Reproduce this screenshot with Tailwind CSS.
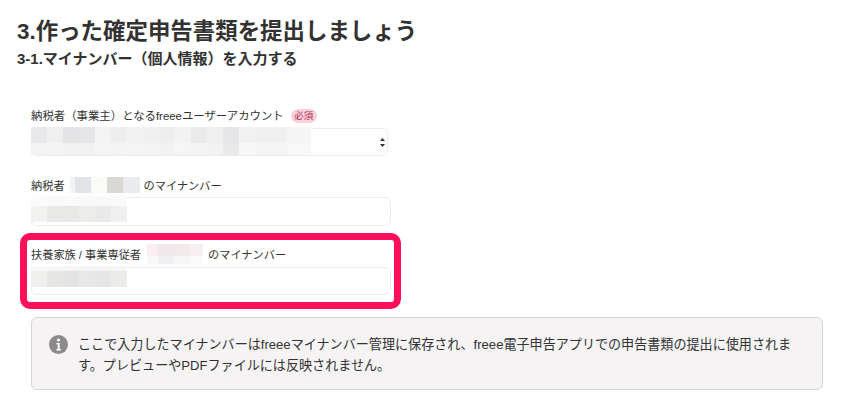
<!DOCTYPE html>
<html lang="ja">
<head>
    <meta charset="UTF-8">
    <title>確定申告書類の提出</title>
    <script src="https://cdn.jsdelivr.net/npm/@tailwindcss/browser@4"></script>
</head>
<body class="bg-white text-[#323232] font-['Liberation_Sans','Noto_Sans_CJK_JP',sans-serif] overflow-hidden">
    <div class="w-[854px] h-[410px] pl-[17px] pt-[17px]">
        <h1 class="text-[22.45px] leading-[30px] font-bold">3.作った確定申告書類を提出しましょう</h1>
        <h2 class="text-[15px] leading-[20px] font-bold mt-[2px]">3-1.マイナンバー（個人情報）を入力する</h2>

        <!-- Form -->
        <div class="relative ml-[14px] w-[360px] mt-[37px]">
            <div class="flex items-center h-[18px] text-[11.4px]">
                <span class="pt-[3px]">納税者（事業主）となるfreeeユーザーアカウント</span>
                <span class="ml-[7px] mt-[1px] w-[26px] text-center h-[14px] leading-[14px] rounded-full bg-[#f8d0d8] text-[#b8325a] text-[9.5px]">必須</span>
            </div>
            <div class="relative mt-[4px] w-[357px] h-[28px] border border-[#ececec] rounded-md bg-white">
                <svg class="absolute right-[2px] top-[9px]" width="5" height="9" viewBox="0 0 5 9"><path d="M2.5 0 5 3H0zM2.5 9 0 6h5z" fill="#333"/></svg>
                <div class="absolute left-[-1px] top-[-2px] w-[280px] grid grid-cols-[repeat(10,16px)_120px] grid-rows-[16px_12px]">
                    <div class="bg-[#e8e8ea]"></div><div class="bg-[#efeff0]"></div><div class="bg-[#e4e4e7]"></div><div class="bg-[#e6e6e8]"></div><div class="bg-[#f3f3f3]"></div><div class="bg-[#eeeeef]"></div><div class="bg-[#f2f2f2]"></div><div class="bg-[#f0f0f0]"></div><div class="bg-[#eeeeee]"></div><div class="bg-[#f2f2f2]"></div>
                    <div class="bg-[linear-gradient(90deg,#eaeaeb_0_16px,#efefef_16px_32px,#e6e6e8_32px_48px,#f1f1f1_48px_64px,#f0f0f0_64px_96px,#f5f5f5_96px)]"></div>
                    <div class="bg-[#f3f3f3]"></div><div class="bg-[#f4f4f4]"></div><div class="bg-[#f1f1f2]"></div><div class="bg-[#f1f1f1]"></div><div class="bg-[#f5f5f5]"></div><div class="bg-[#f3f3f3]"></div><div class="bg-[#f5f5f5]"></div><div class="bg-[#f4f4f4]"></div><div class="bg-[#f2f2f2]"></div><div class="bg-[#f6f6f6]"></div>
                    <div class="bg-[linear-gradient(90deg,#f4f4f4_0_16px,#f2f2f2_16px_32px,#e9e9ea_32px_48px,#f7f7f7_48px_64px,#f5f5f5_64px_96px,#f8f8f8_96px)]"></div>
                </div>
            </div>

            <div class="flex items-center h-[18px] text-[11.2px] mt-[20px]">
                <span class="pt-[3px]">納税者</span>
                <div class="ml-[5px] w-[70px] h-[16px] grid grid-cols-[5px_16px_16px_16px_17px]">
                    <div class="bg-[#f1f2f5]"></div><div class="bg-[#e1e3e6]"></div><div class="bg-[#fafaf8]"></div><div class="bg-[#d9d8d5]"></div><div class="bg-[#e9ebee]"></div>
                </div>
                <span class="ml-[4px] pt-[3px]">のマイナンバー</span>
            </div>
            <div class="relative mt-[3px] w-[360px] h-[29px] border border-[#ececec] rounded-md bg-white">
                <div class="absolute left-[-1px] top-[-2px] w-[96px] h-[26px] grid grid-cols-6 grid-rows-[10px_16px]">
                    <div class="bg-[#fbfbfb]"></div><div class="bg-[#fafafa]"></div><div class="bg-[#fafafa]"></div><div class="bg-[#f9f9f9]"></div><div class="bg-[#f8f8f8]"></div><div class="bg-[#fafafa]"></div>
                    <div class="bg-[#f2f2f0]"></div><div class="bg-[#e9e9e7]"></div><div class="bg-[#e8e8e7]"></div><div class="bg-[#ececeb]"></div><div class="bg-[#e9e9e9]"></div><div class="bg-[#eeefee]"></div>
                </div>
            </div>

            <div class="flex items-center h-[18px] text-[11.2px] mt-[19px]">
                <span class="pt-[3px]">扶養家族 / 事業専従者</span>
                <div class="ml-[6px] w-[56px] h-[20px] grid grid-cols-[11px_16px_16px_13px] grid-rows-[12px_8px]">
                    <div class="bg-[#f9eff0]"></div><div class="bg-[#f0e8ea]"></div><div class="bg-[#f2e9eb]"></div><div class="bg-[#f6eef0]"></div>
                    <div class="bg-[#f8f8f8]"></div><div class="bg-[#f0f0f2]"></div><div class="bg-[#f6f6f7]"></div><div class="bg-[#fafafa]"></div>
                </div>
                <span class="ml-[5px] pt-[3px]">のマイナンバー</span>
            </div>
            <div class="relative mt-[4px] w-[360px] h-[28px] border border-[#ececec] rounded-md bg-white">
                <div class="absolute left-[-1px] top-[-2px] w-[96px] h-[21px] grid grid-cols-6 grid-rows-[5px_16px]">
                    <div class="bg-[#f7f7f7]"></div><div class="bg-[#f6f6f6]"></div><div class="bg-[#f6f6f6]"></div><div class="bg-[#f5f5f5]"></div><div class="bg-[#f3f3f3]"></div><div class="bg-[#f6f6f6]"></div>
                    <div class="bg-[#efefee]"></div><div class="bg-[#e6e6e5]"></div><div class="bg-[#e3e3e3]"></div><div class="bg-[#e8e8e8]"></div><div class="bg-[#e6e6e6]"></div><div class="bg-[#ebebea]"></div>
                </div>
            </div>

            <!-- Highlight frame -->
            <div class="absolute left-[-11px] top-[127px] w-[381px] h-[76px] border-[7px] border-[#ff0f5a] rounded-[10px]"></div>
        </div>

        <!-- Notice -->
        <div class="flex ml-[14px] mt-[22px] w-[792px] h-[73px] pl-[17px] pr-[20px] pt-[16px] bg-[#f5f3f4] border border-[#d5d5d5] rounded-md">
            <svg class="shrink-0 mt-[1px]" width="19" height="19" viewBox="0 0 19 19">
                <circle cx="9.5" cy="9.5" r="9.5" fill="#8c8a8a"/>
                <circle cx="9.5" cy="5" r="1.6" fill="#fff"/>
                <path d="M7.5 8h3.2v6H12v1.4H7.4V14h1.3V9.4H7.5z" fill="#fff"/>
            </svg>
            <p class="ml-[10px] text-[13.08px] leading-[21px]">ここで入力したマイナンバーはfreeeマイナンバー管理に保存され、freee電子申告アプリでの申告書類の提出に使用されます。プレビューやPDFファイルには反映されません。</p>
        </div>
    </div>
</body>
</html>
